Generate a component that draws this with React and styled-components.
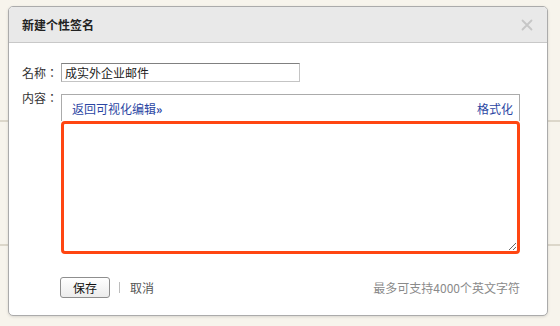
import React from "react";
import styled, { createGlobalStyle } from "styled-components";

const GlobalStyle = createGlobalStyle`
  html, body {
    margin: 0;
    padding: 0;
  }
  body {
    width: 560px;
    height: 326px;
    overflow: hidden;
    font-family: "Noto Sans CJK SC", "Liberation Sans", sans-serif;
    font-size: 12px;
    color: #333;
    background-color: #f7f4ec;
    background-image:
      linear-gradient(to bottom, transparent 120px, #dcd7ca 120px, #dcd7ca 122px, transparent 122px),
      linear-gradient(to bottom, transparent 244px, #dcd7ca 244px, #dcd7ca 246px, transparent 246px);
  }
`;

const Page = styled.div`
  padding: 6px 0 0 8px;
`;

const Dialog = styled.div`
  width: 538px;
  height: 308px;
  background: #fff;
  border: 1px solid #ababab;
  border-radius: 5px;
  box-shadow: 0 1px 3px rgba(0, 0, 0, 0.12);
  display: flex;
  flex-direction: column;
  overflow: hidden;
`;

const Header = styled.div`
  height: 35px;
  flex: none;
  background: #e9e9e9;
  border-bottom: 1px solid #c8c8c8;
  display: flex;
  align-items: center;
  justify-content: space-between;
  padding: 0 14px 0 13px;
`;

const Title = styled.h2`
  margin: 0;
  font-size: 12px;
  font-weight: bold;
  color: #222;
  line-height: 16px;
`;

const Close = styled.button`
  border: 0;
  padding: 0;
  background: none;
  width: 12px;
  height: 12px;
  display: flex;
  cursor: pointer;
`;

const Body = styled.div`
  padding: 20px 27px 0 13px;
  display: flex;
  flex-direction: column;
`;

const Row = styled.div`
  display: flex;
  align-items: ${(p) => (p.$top ? "flex-start" : "center")};
  margin-top: ${(p) => p.$gap || 0}px;
`;

const Label = styled.label`
  width: 39px;
  flex: none;
  line-height: 16px;
  color: #333;
  font-family: "Noto Sans CJK TC", "Noto Sans CJK SC", sans-serif;
  margin-top: ${(p) => p.$offset || 0}px;
`;

const NameInput = styled.input`
  box-sizing: border-box;
  width: 239px;
  height: 19px;
  margin: 0;
  padding: 0 3px;
  font-family: inherit;
  font-size: 12px;
  color: #222;
  border: 1px solid #c4c4c4;
  border-top-color: #808080;
  border-left-color: #a6a6a6;
  outline: none;
`;

const Editor = styled.div`
  width: 459px;
  display: flex;
  flex-direction: column;
`;

const Toolbar = styled.div`
  height: 26px;
  border: 1px solid #ababab;
  border-bottom: 0;
  display: flex;
  align-items: center;
  justify-content: space-between;
  padding: 0 6px 0 10px;
`;

const ToolLink = styled.a`
  color: #2b46a3;
  text-decoration: none;
  line-height: 16px;
  padding-top: 2px;
  cursor: pointer;

  b {
    font-weight: bold;
  }
`;

const Area = styled.textarea`
  box-sizing: border-box;
  display: block;
  width: 459px;
  height: 133px;
  margin: 0;
  padding: 1px 2px;
  border: 3px solid #ff4612;
  border-radius: 4px;
  outline: none;
  resize: vertical;
  font-family: inherit;
  font-size: 12px;
  line-height: 16px;
  caret-color: #000;
`;

const Footer = styled.div`
  display: flex;
  align-items: center;
  margin-top: 23px;
  padding-left: 38px;
`;

const SaveButton = styled.button`
  box-sizing: border-box;
  width: 50px;
  height: 21px;
  padding: 0;
  font-family: inherit;
  font-size: 12px;
  color: #111;
  border: 1px solid #8e8e8e;
  border-radius: 3px;
  background: linear-gradient(#fff, #ececec);
  cursor: pointer;
`;

const Divider = styled.span`
  width: 1px;
  height: 11px;
  background: #bdbdbd;
  margin: 0 10px 0 9px;
`;

const Cancel = styled.a`
  color: #555;
  line-height: 16px;
  cursor: pointer;
`;

const Hint = styled.span`
  margin-left: auto;
  color: #8a8a8a;
  line-height: 16px;
`;

const CloseIcon = () => (
  <svg width="12" height="12" viewBox="0 0 12 12">
    <path d="M1.5 1.5 L10.5 10.5 M10.5 1.5 L1.5 10.5" stroke="#c6c6c6" strokeWidth="1.8" strokeLinecap="round" />
  </svg>
);

export default function App() {
  return (
    <>
      <GlobalStyle />
      <Page>
        <Dialog>
          <Header>
            <Title>新建个性签名</Title>
            <Close aria-label="关闭">
              <CloseIcon />
            </Close>
          </Header>
          <Body>
            <Row>
              <Label>名称：</Label>
              <NameInput defaultValue="成实外企业邮件" />
            </Row>
            <Row $top $gap={12}>
              <Label $offset={-4}>内容：</Label>
              <Editor>
                <Toolbar>
                  <ToolLink>
                    返回可视化编辑<b>»</b>
                  </ToolLink>
                  <ToolLink>格式化</ToolLink>
                </Toolbar>
                <Area autoFocus />
              </Editor>
            </Row>
            <Footer>
              <SaveButton>保存</SaveButton>
              <Divider />
              <Cancel>取消</Cancel>
              <Hint>最多可支持4000个英文字符</Hint>
            </Footer>
          </Body>
        </Dialog>
      </Page>
    </>
  );
}
